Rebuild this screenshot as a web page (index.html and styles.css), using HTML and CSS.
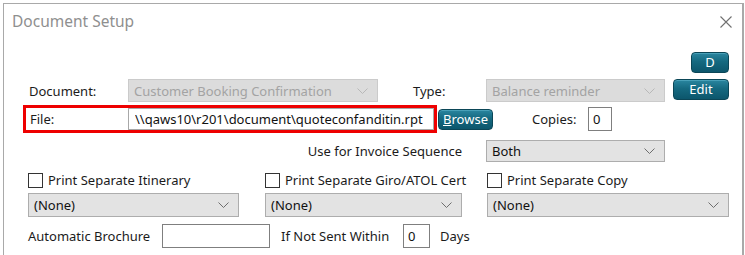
FILE: index.html
```html
<!DOCTYPE html>
<html lang="en">
<head>
  <meta charset="UTF-8">
  <title>Document Setup</title>
  <link rel="stylesheet" href="styles.css">
</head>
<body>
  <div class="dialog">
    <div class="titlebar">
      <span class="title">Document Setup</span>
      <svg class="close" width="12" height="12" viewBox="0 0 12 12"><path d="M0.5 0.5 L11.5 11.5 M11.5 0.5 L0.5 11.5" stroke="#707070" stroke-width="1.1" fill="none"/></svg>
    </div>

    <div class="row row-d">
      <button class="btn btn-d">D</button>
    </div>

    <div class="row row-doc">
      <span class="label lbl-doc">Document:</span>
      <div class="select disabled sel-doc">
        <span>Customer Booking Confirmation</span>
        <svg class="chev" width="11" height="6" viewBox="0 0 11 6"><polyline points="0.5,0.5 5.5,5.5 10.5,0.5" fill="none" stroke="#b8b8b8" stroke-width="1"/></svg>
      </div>
      <span class="label lbl-type">Type:</span>
      <div class="select disabled sel-type">
        <span>Balance reminder</span>
        <svg class="chev" width="11" height="6" viewBox="0 0 11 6"><polyline points="0.5,0.5 5.5,5.5 10.5,0.5" fill="none" stroke="#b8b8b8" stroke-width="1"/></svg>
      </div>
      <button class="btn btn-edit">Edit</button>
    </div>

    <div class="row row-file">
      <div class="highlight">
        <span class="label lbl-file">File:</span>
        <input class="field file-input" type="text" value="\\qaws10\r201\document\quoteconfanditin.rpt" readonly>
      </div>
      <button class="btn btn-browse"><u>B</u>rowse</button>
      <span class="label lbl-copies">Copies:</span>
      <input class="field copies" type="text" value="0" readonly>
    </div>

    <div class="row row-seq">
      <span class="label lbl-seq">Use for Invoice Sequence</span>
      <div class="select sel-seq">
        <span>Both</span>
        <svg class="chev" width="11" height="6" viewBox="0 0 11 6"><polyline points="0.5,0.5 5.5,5.5 10.5,0.5" fill="none" stroke="#6d6d6d" stroke-width="1"/></svg>
      </div>
    </div>

    <div class="prints">
      <div class="print-col">
        <label class="check"><span class="box"></span>Print Separate Itinerary</label>
        <div class="select sel-none w1">
          <span>(None)</span>
          <svg class="chev" width="11" height="6" viewBox="0 0 11 6"><polyline points="0.5,0.5 5.5,5.5 10.5,0.5" fill="none" stroke="#6d6d6d" stroke-width="1"/></svg>
        </div>
      </div>
      <div class="print-col">
        <label class="check"><span class="box"></span>Print Separate Giro/ATOL Cert</label>
        <div class="select sel-none w2">
          <span>(None)</span>
          <svg class="chev" width="11" height="6" viewBox="0 0 11 6"><polyline points="0.5,0.5 5.5,5.5 10.5,0.5" fill="none" stroke="#6d6d6d" stroke-width="1"/></svg>
        </div>
      </div>
      <div class="print-col">
        <label class="check"><span class="box"></span>Print Separate Copy</label>
        <div class="select sel-none w3">
          <span>(None)</span>
          <svg class="chev" width="11" height="6" viewBox="0 0 11 6"><polyline points="0.5,0.5 5.5,5.5 10.5,0.5" fill="none" stroke="#6d6d6d" stroke-width="1"/></svg>
        </div>
      </div>
    </div>

    <div class="row row-brochure">
      <span class="label lbl-broch">Automatic Brochure</span>
      <input class="field broch-input" type="text" value="" readonly>
      <span class="label lbl-within">If Not Sent Within</span>
      <input class="field days-input" type="text" value="0" readonly>
      <span class="label lbl-days">Days</span>
    </div>
  </div>
</body>
</html>
```

FILE: styles.css
```css
html, body {
  margin: 0;
  padding: 0;
  background: #fff;
}
body {
  font-family: 'Noto Sans', 'Open Sans', Arial, sans-serif;
  font-size: 13px;
  color: #1b1b1b;
  overflow: hidden;
}
.dialog {
  margin: 3px 0 0 3px;
  width: 738px;
  height: 251px;
  border-left: 1px solid #a9a9a9;
  border-top: 1px solid #a9a9a9;
  border-right: 2px solid #a9a9a9;
  background: #fff;
}
.titlebar {
  height: 34px;
  display: flex;
  align-items: center;
  justify-content: space-between;
  padding: 0 10px 0 8px;
}
.title {
  font-size: 15.5px;
  color: #8f8f8f;
}
.close {
  margin-top: 1px;
}
.row {
  display: flex;
  align-items: center;
}

/* buttons */
.btn {
  font-family: inherit;
  font-size: 13px;
  color: #fff;
  border: 1px solid #0b4657;
  border-radius: 4px;
  background: linear-gradient(180deg, #2a86a0 0%, #156980 45%, #0c566c 100%);
  padding: 0;
  line-height: 1;
  box-shadow: inset 0 1px 0 #48a0b8;
}
.row-d {
  margin-top: 14px;
  height: 21px;
  justify-content: flex-end;
  padding-right: 13px;
}
.btn-d {
  width: 38px;
  height: 21px;
}

/* document row */
.row-doc {
  margin-top: 6px;
  height: 23px;
  padding-left: 25px;
}
.label {
  white-space: nowrap;
}
.lbl-doc {
  width: 99px;
}
.select {
  box-sizing: border-box;
  height: 23px;
  display: flex;
  align-items: center;
  justify-content: space-between;
  padding: 0 9px 0 5px;
  background: #e3e3e3;
  border: 1px solid #adadad;
  color: #111;
}
.select.disabled {
  background: #dcdcdc;
  border-color: #cbcbcb;
  color: #a3a3a3;
}
.sel-doc {
  width: 250px;
}
.lbl-type {
  margin-left: 35px;
  width: 73px;
}
.sel-type {
  width: 179px;
}
.btn-edit {
  margin-left: 8px;
  width: 56px;
  height: 21px;
  align-self: flex-start;
}

/* file row */
.row-file {
  margin-top: 3px;
  height: 28px;
  padding-left: 19px;
}
.highlight {
  box-sizing: border-box;
  width: 414px;
  height: 28px;
  border: 3px solid #ee0000;
  display: flex;
  align-items: stretch;
}
.lbl-file {
  width: 98px;
  padding-left: 4px;
  display: flex;
  align-items: center;
}
.field {
  box-sizing: border-box;
  font-family: inherit;
  font-size: 13px;
  color: #111;
  border: 1px solid #7f7f7f;
  background: #fff;
  padding: 0 4px;
  margin: 0;
  outline: none;
}
.file-input {
  flex: 1;
  min-width: 0;
  border-color: #a8a8a8;
  padding-left: 6px;
}
.btn-browse {
  margin-left: 1px;
  width: 55px;
  height: 21px;
}
.lbl-copies {
  margin-left: 39px;
  width: 56px;
}
.copies {
  width: 24px;
  height: 24px;
}

/* sequence row */
.row-seq {
  margin-top: 7px;
  height: 22px;
}
.lbl-seq {
  width: 458px;
  text-align: right;
}
.sel-seq {
  margin-left: 24px;
  width: 179px;
  height: 22px;
}

/* print separate columns */
.prints {
  margin-top: 10px;
  padding-left: 24px;
  display: grid;
  grid-template-columns: 237px 222px 242px;
}
.print-col {
  display: flex;
  flex-direction: column;
  gap: 5px;
}
.check {
  display: flex;
  align-items: center;
  height: 16px;
  white-space: nowrap;
}
.box {
  box-sizing: border-box;
  width: 15px;
  height: 15px;
  border: 1px solid #333;
  background: #fff;
  margin-right: 5px;
}
.sel-none {
  height: 24px;
}
.w1 { width: 211px; }
.w2 { width: 197px; }
.w3 { width: 242px; }

/* brochure row */
.row-brochure {
  margin-top: 7px;
  height: 24px;
  padding-left: 24px;
}
.lbl-broch {
  width: 134px;
}
.broch-input {
  width: 108px;
  height: 24px;
}
.lbl-within {
  margin-left: 11px;
  width: 122px;
}
.days-input {
  width: 27px;
  height: 24px;
}
.lbl-days {
  margin-left: 10px;
}
```
